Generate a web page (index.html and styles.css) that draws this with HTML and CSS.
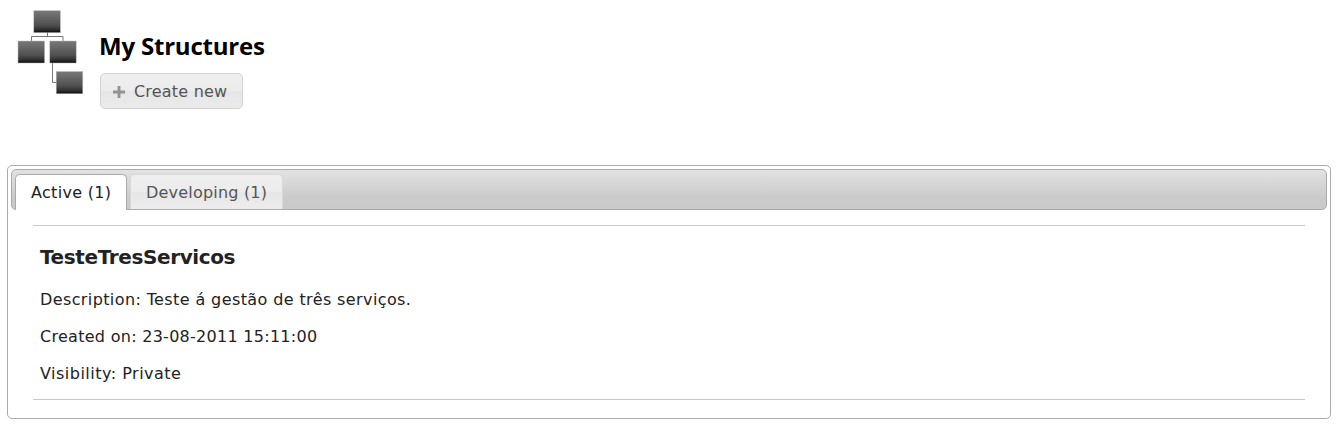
FILE: index.html
```html
<!DOCTYPE html>
<html lang="en">
<head>
<meta charset="utf-8">
<title>My Structures</title>
<link rel="stylesheet" href="styles.css">
</head>
<body>
<header class="header">
  <svg class="logo" width="68" height="86" viewBox="0 0 68 86" aria-hidden="true">
    <defs>
      <linearGradient id="box" x1="0" y1="0" x2="0" y2="1">
        <stop offset="0" stop-color="#777"/>
        <stop offset=".2" stop-color="#6c6c6c"/>
        <stop offset=".65" stop-color="#505050"/>
        <stop offset=".88" stop-color="#2c2c2c"/>
        <stop offset="1" stop-color="#080808"/>
      </linearGradient>
    </defs>
    <path d="M30.5 22v4.500M14.500 31v-4.500h31.500v4.500M35.500 52v20.500h4" fill="none" stroke="#777"/>
    <g fill="url(#box)" stroke="#bbb" stroke-width=".5">
      <rect x="16.800" y=".7" width="26.600" height="22"/>
      <rect x="1" y="31" width="26.600" height="22"/>
      <rect x="32.800" y="31" width="26.400" height="22"/>
      <rect x="39.200" y="61.500" width="26.600" height="22.300"/>
    </g>
  </svg>
  <div class="heading">
    <h1 class="title">My Structures</h1>
    <button class="button" type="button">
      <svg class="plus" width="12" height="12" viewBox="0 0 12 12" aria-hidden="true"><path d="M6 0v12M0 6h12" stroke="#929292" stroke-width="2.800"/></svg>
      <span class="button-label">Create new</span>
    </button>
  </div>
</header>
<main class="tabs">
  <nav class="tab-bar">
    <a class="tab tab-active">Active (1)</a>
    <a class="tab">Developing (1)</a>
  </nav>
  <section class="panel">
    <h2 class="name">TesteTresServicos</h2>
    <p class="line description">Description: Teste á gestão de três serviços.</p>
    <p class="line created">Created on: 23-08-2011 15:11:00</p>
    <p class="line visibility">Visibility: Private</p>
  </section>
</main>
</body>
</html>
```
FILE: styles.css
```css
* { box-sizing: border-box; }
body {
  margin: 0;
  padding: 0 13px 0 7px;
  background: #fff;
  color: #222;
  font: 16px/20px Verdana, "DejaVu Sans", sans-serif;
}
.header {
  display: flex;
  height: 165px;
  padding: 10px 0 0 10px;
  gap: 15px;
}
.logo { flex: none; }
.heading { padding-top: 20px; }
.title {
  margin: 0 0 11px -1px;
  color: #000;
  font: bold 24px/32px "Trebuchet MS", "Open Sans", sans-serif;
  letter-spacing: -.2px;
  white-space: nowrap;
}
.button {
  display: flex;
  align-items: center;
  width: 143px;
  height: 36px;
  padding: 0 0 0 12px;
  gap: 9px;
  border: 1px solid #d3d3d3;
  border-radius: 5px;
  background: linear-gradient(#eeeeee 0, #ececec 50%, #e6e6e6 50%, #ebebeb 100%);
  color: #555;
  font: inherit;
  letter-spacing: .2px;
  white-space: nowrap;
}
.button-label { padding-top: 2px; }
.plus { flex: none; margin-top: 2px; }
.tabs {
  height: 254px;
  padding: 3px;
  border: 1px solid #aaa;
  border-radius: 5px;
}
.tab-bar {
  display: flex;
  height: 41px;
  padding: 4px 3px 0;
  gap: 3px;
  border: 1px solid #aaa;
  border-radius: 5px;
  background: linear-gradient(#e2e2e2, #cbcbcb 70%, #cacaca);
}
.tab {
  height: 35px;
  width: 153px;
  padding: 8px 0 0 15px;
  border: 1px solid #d8d8d8;
  border-bottom: 0;
  border-radius: 5px 5px 0 0;
  background: linear-gradient(#eeeeee 0, #ececec 50%, #e6e6e6 50%, #ededed 100%);
  color: #555;
  letter-spacing: .2px;
  white-space: nowrap;
}
.tab-active {
  width: 112px;
  height: 36px;
  border-color: #aaa;
  background: #fff;
  color: #212121;
  letter-spacing: .3px;
}
.panel {
  height: 175px;
  margin: 15px 22px 0;
  padding: 19px 7px 0;
  border: solid #c8c8c8;
  border-width: 1px 0;
}
.name {
  margin: 0 0 21px;
  font-size: 20px;
  line-height: 24px;
  letter-spacing: -.38px;
}
.line { margin: 0 0 17px; white-space: nowrap; }
.description { letter-spacing: .39px; }
.created { letter-spacing: .28px; }
.visibility { letter-spacing: .49px; }
```
